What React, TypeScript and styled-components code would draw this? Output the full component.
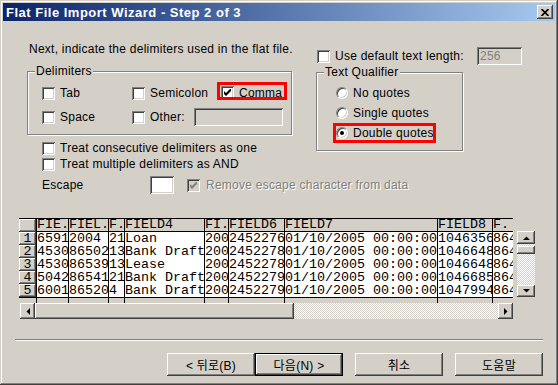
import React from "react";
import styled, { createGlobalStyle, css } from "styled-components";

const FACE = "#d4d0c8";
const SHADOW = "#808080";
const DARK = "#404040";
const UI_FONT = `"Liberation Sans", Arial, "Noto Sans CJK KR", sans-serif`;
const GRID_FONT = `"Liberation Mono", "Courier New", monospace`;

const GlobalStyle = createGlobalStyle`
  html, body {
    margin: 0;
    padding: 0;
    background: ${FACE};
  }
  body {
    font-family: ${UI_FONT};
    font-size: 12px;
    letter-spacing: 0.25px;
    color: #000;
  }
  * {
    box-sizing: border-box;
  }
`;

const raised = css`
  background: ${FACE};
  box-shadow: inset -1px -1px 0 ${DARK}, inset 1px 1px 0 #fff,
    inset -2px -2px 0 ${SHADOW}, inset 2px 2px 0 ${FACE};
`;

const sunken = css`
  box-shadow: inset 1px 1px 0 ${SHADOW}, inset -1px -1px 0 #fff,
    inset 2px 2px 0 ${DARK}, inset -2px -2px 0 ${FACE};
`;

const hatched = css`
  background-color: #fff;
  background-image: repeating-conic-gradient(${FACE} 0% 25%, #fff 0% 50%);
  background-size: 2px 2px;
`;

const Window = styled.div`
  width: 558px;
  height: 385px;
  padding: 3px;
  background: ${FACE};
  box-shadow: inset -1px -1px 0 ${DARK}, inset 1px 1px 0 ${FACE},
    inset -2px -2px 0 ${SHADOW}, inset 2px 2px 0 #fff;
  display: flex;
  flex-direction: column;
  overflow: hidden;
`;

const TitleBar = styled.div`
  flex: none;
  height: 18px;
  display: flex;
  align-items: center;
  padding: 0 2px 0 3px;
  background: linear-gradient(to right, #0a246a, #a6caf0);
`;

const Title = styled.div`
  flex: 1;
  color: #fff;
  font-weight: bold;
  font-size: 13px;
  letter-spacing: 0.5px;
  white-space: nowrap;
`;

const CloseButton = styled.div`
  width: 16px;
  height: 14px;
  display: flex;
  align-items: center;
  justify-content: center;
  ${raised};
`;

const Body = styled.div`
  flex: 1;
  display: flex;
  flex-direction: column;
`;

const TopSection = styled.div`
  display: flex;
  align-items: flex-start;
  gap: 24px;
  margin: 21px 0 0 24px;
`;

const LeftCol = styled.div`
  width: 265px;
  display: flex;
  flex-direction: column;
`;

const Intro = styled.div`
  height: 14px;
  line-height: 14px;
  padding-left: 2px;
  white-space: nowrap;
`;

const GroupBox = styled.div<{ $w: number; $h: number; $top: number; $pad: string }>`
  position: relative;
  width: ${(p) => p.$w}px;
  height: ${(p) => p.$h}px;
  margin-top: ${(p) => p.$top}px;
  padding: ${(p) => p.$pad};
  border: 1px solid ${SHADOW};
  box-shadow: inset 1px 1px 0 #fff, 1px 1px 0 #fff;
`;

const Legend = styled.span`
  position: absolute;
  top: -8px;
  left: 7px;
  padding: 0 1px;
  line-height: 14px;
  background: ${FACE};
  white-space: nowrap;
`;

const DelimGrid = styled.div`
  display: grid;
  grid-template-columns: 90px 89px 64px;
  grid-template-rows: 14px 18px;
  row-gap: 8px;
  align-items: center;
`;

const Option = styled.label`
  flex: none;
  display: flex;
  align-items: center;
  gap: 5px;
  line-height: 14px;
  white-space: nowrap;
`;

const OtherOption = styled(Option)`
  grid-column: span 2;
`;

const Highlight = styled.label<{ $w: number; $h: number }>`
  display: flex;
  align-items: center;
  gap: 5px;
  width: ${(p) => p.$w}px;
  height: ${(p) => p.$h}px;
  line-height: 14px;
  white-space: nowrap;
  overflow: hidden;
  outline: 3px solid #ff0000;
`;

const CommaHighlight = styled(Highlight)`
  align-self: start;
  align-items: flex-start;
  margin: -1px 0 0 -1px;
  padding: 1px 0 0 1px;
`;

const BoxMark = styled.span<{ $disabled?: boolean }>`
  flex: none;
  width: 13px;
  height: 13px;
  display: flex;
  align-items: center;
  justify-content: center;
  background: ${(p) => (p.$disabled ? FACE : "#fff")};
  ${sunken};
`;

const RadioMark = styled.span<{ $on?: boolean }>`
  flex: none;
  position: relative;
  width: 12px;
  height: 12px;
  border-radius: 50%;
  background: #fff;
  border: 1px solid;
  border-color: ${SHADOW} #fff #fff ${SHADOW};
  box-shadow: inset 1px 1px 0 ${DARK}, inset -1px -1px 0 ${FACE};

  &::after {
    content: "";
    display: ${(p) => (p.$on ? "block" : "none")};
    position: absolute;
    left: 3px;
    top: 3px;
    width: 4px;
    height: 4px;
    border-radius: 50%;
    background: #000;
  }
`;

const TextField = styled.span<{ $w: number; $disabled?: boolean }>`
  flex: none;
  width: ${(p) => p.$w}px;
  height: 18px;
  padding: 2px 3px;
  line-height: 14px;
  color: ${SHADOW};
  background: ${(p) => (p.$disabled ? FACE : "#fff")};
  ${sunken};
`;

const OtherField = styled(TextField)`
  margin: 0 2px 0 auto;
`;

const DisabledText = styled.span`
  color: ${SHADOW};
  text-shadow: 1px 1px 0 #fff;
`;

const OptionList = styled.div`
  margin-top: 5px;
  padding-left: 15px;
  display: flex;
  flex-direction: column;
`;

const OptionRow = styled.div`
  height: 16px;
  display: flex;
  align-items: center;
`;

const EscapeRow = styled.div`
  margin-top: 4px;
  height: 18px;
  display: flex;
  align-items: center;
`;

const EscapeLabel = styled.span`
  flex: none;
  width: 108px;
`;

const EscapeOption = styled(Option)`
  margin-left: 13px;
  gap: 6px;
`;

const RightCol = styled.div`
  display: flex;
  flex-direction: column;
  padding-top: 5px;
`;

const LengthRow = styled.div`
  width: 206px;
  height: 18px;
  display: flex;
  align-items: center;
  justify-content: space-between;
  padding-left: 1px;
`;

const RadioRow = styled.div`
  height: 20px;
  display: flex;
  align-items: center;
`;

const GridSection = styled.div`
  display: flex;
  align-items: flex-start;
  gap: 4px;
  margin: 24px 0 0 16px;
`;

const GridColumn = styled.div`
  width: 494px;
  display: flex;
  flex-direction: column;
`;

const DataGrid = styled.div`
  display: grid;
  grid-template-columns: 17px 32px 40px 16px 80px 24px 56px 153px 55px 21px;
  border-top: 1px solid #000;
  font-family: ${GRID_FONT};
  font-size: 13.33px;
  line-height: 13px;
  letter-spacing: 0;
`;

const CornerCell = styled.div`
  height: 13px;
  ${raised};
`;

const HeadCell = styled.div`
  height: 13px;
  background: ${FACE};
  border-left: 1px solid #000;
  border-bottom: 1px solid #000;
  line-height: 12px;
  white-space: pre;
  overflow: hidden;
`;

const RowHead = styled.div`
  height: 13px;
  text-align: center;
  ${raised};
`;

const DataCell = styled.div`
  height: 13px;
  background: #fff;
  border-left: 1px solid #000;
  white-space: pre;
  overflow: hidden;
`;

const FillerCell = styled.div<{ $first?: boolean }>`
  height: 6px;
  background: ${FACE};
  border-top: 1px solid #000;
  border-left: ${(p) => (p.$first ? "none" : "1px solid #000")};
`;

const HScroll = styled.div`
  margin-left: 1px;
  width: 493px;
  height: 16px;
  display: flex;
  ${hatched};
`;

const VScroll = styled.div`
  margin-top: 13px;
  width: 18px;
  height: 66px;
  display: flex;
  flex-direction: column;
  ${hatched};
`;

const ScrollButton = styled.div<{ $w: number; $h: number }>`
  flex: none;
  width: ${(p) => p.$w}px;
  height: ${(p) => p.$h}px;
  display: flex;
  align-items: center;
  justify-content: center;
  ${raised};
`;

const HThumb = styled.div`
  width: 259px;
  height: 16px;
  ${raised};
`;

const HTrack = styled.div`
  flex: 1;
`;

const VTrack = styled.div`
  flex: 1;
  padding-top: 2px;
`;

const VThumb = styled.div`
  height: 8px;
  ${raised};
`;

const Separator = styled.div`
  margin: 20px 0 0 12px;
  width: 528px;
  height: 2px;
  border-top: 1px solid ${SHADOW};
  border-bottom: 1px solid #fff;
`;

const ButtonRow = styled.div`
  margin-top: 12px;
  padding-right: 12px;
  display: flex;
  justify-content: flex-end;
`;

const PushButton = styled.button<{ $default?: boolean; $spaced?: boolean }>`
  width: 88px;
  height: 23px;
  margin-left: ${(p) => (p.$spaced ? 12 : 0)}px;
  padding: 0;
  font-family: ${UI_FONT};
  font-size: 12px;
  letter-spacing: 0.25px;
  color: #000;
  border: ${(p) => (p.$default ? "1px solid #000" : "none")};
  ${raised};
`;

function CheckBox({ checked, disabled }: { checked?: boolean; disabled?: boolean }) {
  return (
    <BoxMark $disabled={disabled}>
      {checked && (
        <svg width="7" height="7" viewBox="0 0 7 7">
          <polygon
            points="0,2 2,4 7,-1 7,2 2,7 0,5"
            fill={disabled ? SHADOW : "#000"}
          />
        </svg>
      )}
    </BoxMark>
  );
}

function Arrow({ dir }: { dir: "up" | "down" | "left" | "right" }) {
  const pts = {
    up: "0,4 7,4 3.5,0.5",
    down: "0,0 7,0 3.5,3.5",
    left: "4,0 4,7 0.5,3.5",
    right: "0,0 0,7 3.5,3.5",
  }[dir];
  const vertical = dir === "up" || dir === "down";
  return (
    <svg width={vertical ? 7 : 4} height={vertical ? 4 : 7}>
      <polygon points={pts} fill="#000" />
    </svg>
  );
}

const columns = ["FIE.", "FIEL.", "F.", "FIELD4", "FI.", "FIELD6", "FIELD7", "FIELD8", "F."];

const rows = [
  ["6591", "2004", "21", "Loan", "200", "2452276", "01/10/2005 00:00:00", "1046356", "864"],
  ["4530", "86502", "13", "Bank Draft", "200", "2452278", "01/10/2005 00:00:00", "1046648", "864"],
  ["4530", "86539", "13", "Lease", "200", "2452278", "01/10/2005 00:00:00", "1046648", "864"],
  ["5042", "86541", "21", "Bank Draft", "200", "2452279", "01/10/2005 00:00:00", "1046685", "864"],
  ["6001", "86520", "4", "Bank Draft", "200", "2452279", "01/10/2005 00:00:00", "1047994", "864"],
];

export default function App() {
  return (
    <>
      <GlobalStyle />
      <Window>
        <TitleBar>
          <Title>Flat File Import Wizard - Step 2 of 3</Title>
          <CloseButton>
            <svg width="8" height="7" viewBox="0 0 8 7">
              <path d="M0.5 0 L7.5 7 M7.5 0 L0.5 7" stroke="#000" strokeWidth="1.7" />
            </svg>
          </CloseButton>
        </TitleBar>

        <Body>
          <TopSection>
            <LeftCol>
              <Intro>Next, indicate the delimiters used in the flat file.</Intro>
              <GroupBox $w={265} $h={64} $top={15} $pad="14px 0 0 14px">
                <Legend>Delimiters</Legend>
                <DelimGrid>
                  <Option>
                    <CheckBox />
                    Tab
                  </Option>
                  <Option>
                    <CheckBox />
                    Semicolon
                  </Option>
                  <CommaHighlight $w={64} $h={12}>
                    <CheckBox checked />
                    Comma
                  </CommaHighlight>
                  <Option>
                    <CheckBox />
                    Space
                  </Option>
                  <OtherOption>
                    <CheckBox />
                    Other:
                    <OtherField $w={89} $disabled />
                  </OtherOption>
                </DelimGrid>
              </GroupBox>

              <OptionList>
                <OptionRow>
                  <Option>
                    <CheckBox />
                    Treat consecutive delimiters as one
                  </Option>
                </OptionRow>
                <OptionRow>
                  <Option>
                    <CheckBox />
                    Treat multiple delimiters as AND
                  </Option>
                </OptionRow>
                <EscapeRow>
                  <EscapeLabel>Escape</EscapeLabel>
                  <TextField $w={24} />
                  <EscapeOption>
                    <CheckBox checked disabled />
                    <DisabledText>Remove escape character from data</DisabledText>
                  </EscapeOption>
                </EscapeRow>
              </OptionList>
            </LeftCol>

            <RightCol>
              <LengthRow>
                <Option>
                  <CheckBox />
                  Use default text length:
                </Option>
                <TextField $w={45} $disabled>
                  256
                </TextField>
              </LengthRow>
              <GroupBox $w={147} $h={79} $top={7} $pad="10px 0 0 19px">
                <Legend>Text Qualifier</Legend>
                <RadioRow>
                  <Option>
                    <RadioMark />
                    No quotes
                  </Option>
                </RadioRow>
                <RadioRow>
                  <Option>
                    <RadioMark />
                    Single quotes
                  </Option>
                </RadioRow>
                <RadioRow>
                  <Highlight $w={97} $h={14}>
                    <RadioMark $on />
                    Double quotes
                  </Highlight>
                </RadioRow>
              </GroupBox>
            </RightCol>
          </TopSection>

          <GridSection>
            <GridColumn>
              <DataGrid>
                <CornerCell />
                {columns.map((c, i) => (
                  <HeadCell key={i}>{c}</HeadCell>
                ))}
                {rows.map((r, ri) => (
                  <React.Fragment key={ri}>
                    <RowHead>{ri + 1}</RowHead>
                    {r.map((v, ci) => (
                      <DataCell key={ci}>{v}</DataCell>
                    ))}
                  </React.Fragment>
                ))}
                <FillerCell $first />
                {columns.map((_, i) => (
                  <FillerCell key={i} />
                ))}
              </DataGrid>
              <HScroll>
                <ScrollButton $w={15} $h={16}>
                  <Arrow dir="left" />
                </ScrollButton>
                <HThumb />
                <HTrack />
                <ScrollButton $w={15} $h={16}>
                  <Arrow dir="right" />
                </ScrollButton>
              </HScroll>
            </GridColumn>
            <VScroll>
              <ScrollButton $w={18} $h={13}>
                <Arrow dir="up" />
              </ScrollButton>
              <VTrack>
                <VThumb />
              </VTrack>
              <ScrollButton $w={18} $h={12}>
                <Arrow dir="down" />
              </ScrollButton>
            </VScroll>
          </GridSection>

          <Separator />

          <ButtonRow>
            <PushButton>&lt; 뒤로(B)</PushButton>
            <PushButton $default>다음(N) &gt;</PushButton>
            <PushButton $spaced>취소</PushButton>
            <PushButton $spaced>도움말</PushButton>
          </ButtonRow>
        </Body>
      </Window>
    </>
  );
}
